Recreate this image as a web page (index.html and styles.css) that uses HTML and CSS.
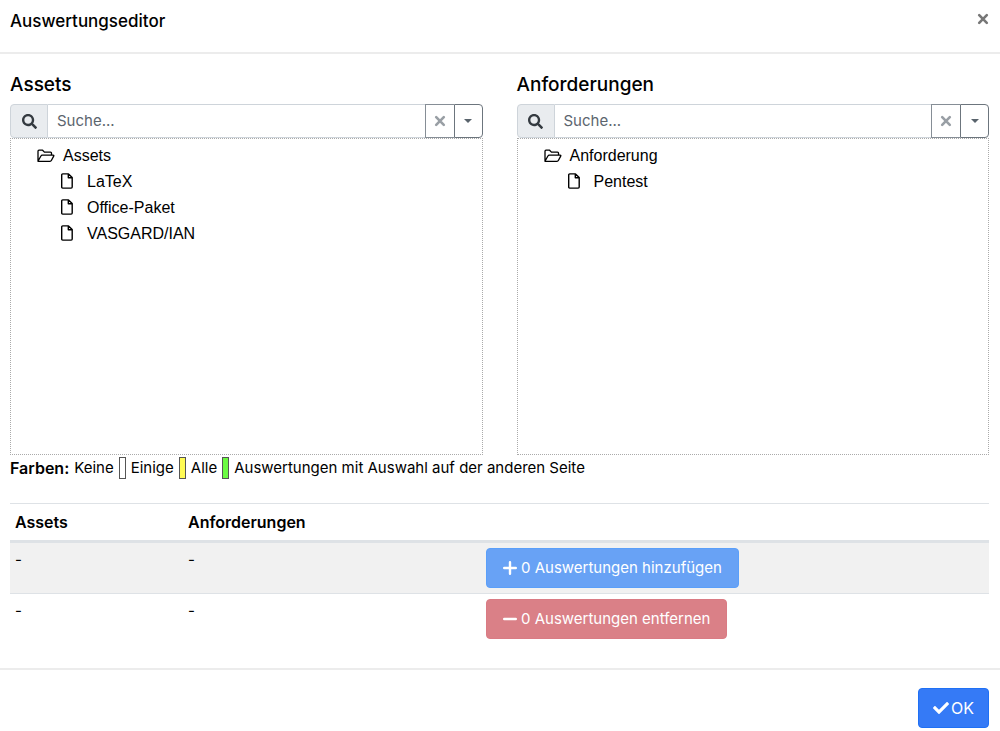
FILE: index.html
```html
<!DOCTYPE html>
<html lang="de">
<head>
<meta charset="utf-8">
<meta name="viewport" content="width=device-width, initial-scale=1">
<title>Auswertungseditor</title>
<link rel="stylesheet" href="styles.css">
</head>
<body>
<svg class="symbols" aria-hidden="true">
  <symbol id="search" viewBox="0 0 512 512"><path d="M505 442.700 405.300 343c-4.500-4.500-10.600-7-17-7H372c27.600-35.300 44-79.700 44-128C416 93.100 322.900 0 208 0S0 93.100 0 208s93.100 208 208 208c48.300 0 92.700-16.400 128-44v16.300c0 6.400 2.500 12.500 7 17l99.700 99.700c9.400 9.400 24.600 9.400 33.900 0l28.300-28.300c9.400-9.400 9.400-24.600.1-34zM208 336c-70.700 0-128-57.200-128-128 0-70.700 57.200-128 128-128 70.700 0 128 57.200 128 128 0 70.700-57.200 128-128 128z"/></symbol>
  <symbol id="times" viewBox="0 0 12 12"><path d="M2.200 2.200 9.800 9.800M9.800 2.200 2.200 9.800" fill="none" stroke="currentColor" stroke-width="2.600" stroke-linecap="round"/></symbol>
  <symbol id="folder" viewBox="0 0 18 14"><path d="M1 12.300V2.200q0-1 1-1h3.600l1.800 1.900h6.100q1 0 1 1v2M1 12.300 3.900 7q.4-.9 1.400-.9h10.800q1.100 0 .6 1l-2.200 4.200q-.5 1-1.500 1H1.500q-.5 0-.5-.3z" fill="none" stroke="currentColor" stroke-width="1.300" stroke-linejoin="round"/></symbol>
  <symbol id="file" viewBox="0 0 12 16"><path d="M1.700.9h5.800l3.700 3.700v9.500q0 1-1 1H1.700q-1 0-1-1V1.900q0-1 1-1zM7.300.9v3.900h3.900" fill="none" stroke="currentColor" stroke-width="1.400" stroke-linejoin="round"/></symbol>
  <symbol id="plus" viewBox="0 0 14 14"><path d="M7 1.200v11.600M1.200 7h11.600" fill="none" stroke="currentColor" stroke-width="2.400" stroke-linecap="round"/></symbol>
  <symbol id="minus" viewBox="0 0 14 14"><path d="M1.200 7h11.600" fill="none" stroke="currentColor" stroke-width="2.400" stroke-linecap="round"/></symbol>
  <symbol id="check" viewBox="0 0 512 512"><path d="M173.900 439.400 7.500 273c-10-10-10-26.200 0-36.200l36.200-36.200c10-10 26.200-10 36.200 0L192 312.700 432.100 72.600c10-10 26.200-10 36.200 0l36.200 36.200c10 10 10 26.200 0 36.200L210.100 439.400c-10 10-26.200 10-36.200 0z"/></symbol>
</svg>
<div class="modal">
  <header class="modal-header">
    <h1 class="modal-title">Auswertungseditor</h1>
    <button class="close" type="button" aria-label="Schließen"><svg class="icon-times"><use href="#times"/></svg></button>
  </header>
  <main class="modal-body">
    <div class="columns">
      <section>
        <h2 class="column-title">Assets</h2>
        <div class="search">
          <label class="search-label" for="search-assets" aria-label="Assets suchen"><svg class="icon-search"><use href="#search"/></svg></label>
          <input class="search-input" id="search-assets" type="text" placeholder="Suche...">
          <button class="search-clear" type="button" aria-label="Leeren"><svg class="icon-times"><use href="#times"/></svg></button>
          <button class="search-menu" type="button" aria-label="Optionen"><span class="caret"></span></button>
        </div>
        <div class="tree">
          <ul class="tree-list">
            <li><span class="node"><svg class="icon-folder"><use href="#folder"/></svg>Assets</span>
              <ul class="tree-list tree-children">
                <li class="node"><svg class="icon-file"><use href="#file"/></svg>LaTeX</li>
                <li class="node"><svg class="icon-file"><use href="#file"/></svg>Office-Paket</li>
                <li class="node"><svg class="icon-file"><use href="#file"/></svg>VASGARD/IAN</li>
              </ul>
            </li>
          </ul>
        </div>
      </section>
      <section>
        <h2 class="column-title">Anforderungen</h2>
        <div class="search">
          <label class="search-label" for="search-requirements" aria-label="Anforderungen suchen"><svg class="icon-search"><use href="#search"/></svg></label>
          <input class="search-input" id="search-requirements" type="text" placeholder="Suche...">
          <button class="search-clear" type="button" aria-label="Leeren"><svg class="icon-times"><use href="#times"/></svg></button>
          <button class="search-menu" type="button" aria-label="Optionen"><span class="caret"></span></button>
        </div>
        <div class="tree">
          <ul class="tree-list">
            <li><span class="node"><svg class="icon-folder"><use href="#folder"/></svg>Anforderung</span>
              <ul class="tree-list tree-children">
                <li class="node"><svg class="icon-file"><use href="#file"/></svg>Pentest</li>
              </ul>
            </li>
          </ul>
        </div>
      </section>
    </div>
    <p class="legend"><strong class="legend-title">Farben:</strong> <span>Keine</span> <i class="swatch"></i> <span>Einige</span> <i class="swatch swatch-some"></i> <span>Alle</span> <i class="swatch swatch-all"></i> <span>Auswertungen mit Auswahl auf der anderen Seite</span></p>
    <table class="table">
      <thead>
        <tr><th class="col-assets">Assets</th><th class="col-requirements">Anforderungen</th><th></th></tr>
      </thead>
      <tbody>
        <tr><td>-</td><td>-</td><td><button class="btn btn-add" type="button" disabled><svg class="icon-sign"><use href="#plus"/></svg>0 Auswertungen hinzufügen</button></td></tr>
        <tr><td>-</td><td>-</td><td><button class="btn btn-remove" type="button" disabled><svg class="icon-sign"><use href="#minus"/></svg>0 Auswertungen entfernen</button></td></tr>
      </tbody>
    </table>
  </main>
  <footer class="modal-footer">
    <button class="btn btn-ok" type="button"><svg class="icon-check"><use href="#check"/></svg>OK</button>
  </footer>
</div>
</body>
</html>
```
FILE: styles.css
```css
* { box-sizing: border-box; }

body {
  margin: 0;
  background: #fff;
  color: #000;
  font: 15px/24px Inter, "Liberation Sans", sans-serif;
}

button, input { margin: 0; font: inherit; }
svg { flex: none; fill: currentColor; }
.symbols { display: none; }

.modal-header {
  display: flex;
  justify-content: space-between;
  align-items: flex-start;
  padding: 8px 10px 18px;
  border-bottom: 2px solid #ececec;
}
.modal-title { margin: 0; font-size: 17px; font-weight: 500; line-height: 26px; }
.close { display: flex; padding: 5px 1px; border: 0; background: none; color: #777; }
.icon-times { width: 12px; height: 12px; }

.modal-body { padding: 16px 11px 24px 10px; }
.columns { display: grid; grid-template-columns: 1fr 1fr; gap: 34px; }
.column-title { margin: 0 0 4px; font-size: 19px; font-weight: 500; line-height: 30px; }

.search { display: flex; height: 34px; color: #6c757d; }
.search-label {
  display: flex;
  align-items: center;
  justify-content: center;
  width: 38px;
  border: 1px solid #ced4da;
  border-radius: 4px 0 0 4px;
  background: #e9ecef;
  color: #343a40;
}
.icon-search { width: 15px; height: 15px; }
.search-input {
  flex: 1;
  min-width: 0;
  padding: 0 9px;
  border: solid #ced4da;
  border-width: 1px 0;
  border-radius: 0;
  background: #fff;
  color: #495057;
}
.search-input::placeholder { color: #5c656e; opacity: 1; }
.search-clear, .search-menu {
  display: flex;
  align-items: center;
  justify-content: center;
  padding: 0;
  border: 1px solid #868e96;
  background: #fff;
}
.search-clear { width: 29px; border-right: 0; color: #999fa5; }
.search-menu { width: 29px; border-color: #6c757d; border-radius: 0 4px 4px 0; color: #59636c; }
.caret { border: 4px solid transparent; border-top-color: currentColor; border-bottom: 0; }

.tree {
  min-height: 317px;
  padding: 4px 26px;
  border: 1px dotted #aaa;
  font: 16px/26px "Liberation Sans", Arial, sans-serif;
}
.tree-list { margin: 0; padding: 0; list-style: none; }
.tree-children { padding-left: 24px; }
.node { display: flex; align-items: center; }
.icon-folder { width: 18px; height: 14px; margin-right: 8px; }
.icon-file { width: 12px; height: 16px; margin: 0 14px 2px 0; }

.legend { display: flex; align-items: center; gap: 5px; margin: 1px 0 23px; }
.legend-title { font-size: 16px; font-weight: 600; }
.swatch { width: 7px; height: 22px; border: 1px solid #555; }
.swatch-some { background: #fffb54; }
.swatch-all { background: #6bfa42; }

.table { width: 100%; border-collapse: collapse; table-layout: fixed; }
.table th, .table td { padding: 5px; border-top: 1px solid #dee2e6; text-align: left; vertical-align: top; }
.table th { padding: 6px 5px; border-bottom: 3px solid #dee2e6; font-size: 16px; font-weight: 600; }
.table tbody tr:nth-child(odd) { background: #f1f1f1; }
.col-assets { width: 173px; }
.col-requirements { width: 298px; }

.btn {
  display: flex;
  align-items: center;
  gap: 4px;
  padding: 7px 16px;
  border: 1px solid;
  border-radius: 4px;
  color: #fff;
  line-height: 24px;
}
.btn-add { border-color: #5a9ffa; background: #68a2f5; }
.btn-remove { border-color: #da7b84; background: #da8087; }
.btn-ok { gap: 2px; padding: 7px 14px; border-color: #1f70f5; background: #357af6; font-size: 16px; }
.icon-sign { width: 14px; height: 14px; }
.icon-check { width: 16px; height: 16px; }

.modal-footer {
  display: flex;
  justify-content: flex-end;
  padding: 18px 11px 3px;
  border-top: 2px solid #ececec;
}
```
